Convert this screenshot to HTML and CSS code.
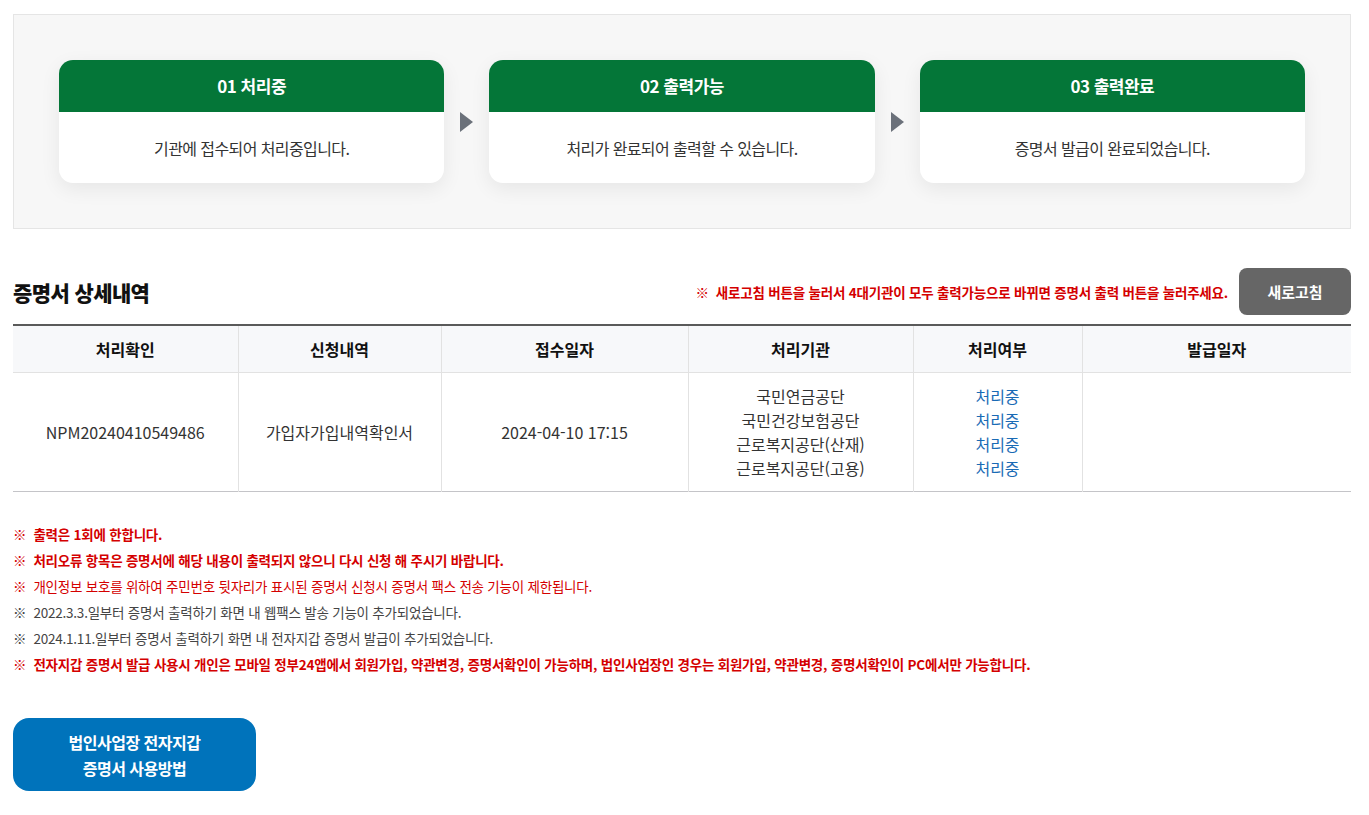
FILE: index.html
```html
<!DOCTYPE html>
<html lang="ko">
<head>
  <meta charset="UTF-8" />
  <meta name="viewport" content="width=device-width, initial-scale=1.0"/>
  <title>증명서 상세내역</title>
  <link rel="stylesheet" href="styles.css">
</head>
<body>
  <div class="page">
    <div class="steps">
      <div class="step">
        <div class="step-head">01 처리중</div>
        <div class="step-body">기관에 접수되어 처리중입니다.</div>
      </div>
      <div class="step-arrow"></div>
      <div class="step">
        <div class="step-head">02 출력가능</div>
        <div class="step-body">처리가 완료되어 출력할 수 있습니다.</div>
      </div>
      <div class="step-arrow"></div>
      <div class="step">
        <div class="step-head">03 출력완료</div>
        <div class="step-body">증명서 발급이 완료되었습니다.</div>
      </div>
    </div>

    <div class="detail-head">
      <h2>증명서 상세내역</h2>
      <div class="detail-tools">
        <p class="refresh-note">※&nbsp; 새로고침 버튼을 눌러서 4대기관이 모두 출력가능으로 바뀌면 증명서 출력 버튼을 눌러주세요.</p>
        <button class="btn-refresh">새로고침</button>
      </div>
    </div>

    <table class="detail-table">
      <colgroup>
        <col style="width:225px">
        <col style="width:203px">
        <col style="width:247px">
        <col style="width:225px">
        <col style="width:169px">
        <col>
      </colgroup>
      <thead>
        <tr>
          <th>처리확인</th>
          <th>신청내역</th>
          <th>접수일자</th>
          <th>처리기관</th>
          <th>처리여부</th>
          <th>발급일자</th>
        </tr>
      </thead>
      <tbody>
        <tr>
          <td>NPM20240410549486</td>
          <td>가입자가입내역확인서</td>
          <td>2024-04-10 17:15</td>
          <td>국민연금공단<br>국민건강보험공단<br>근로복지공단(산재)<br>근로복지공단(고용)</td>
          <td class="status">처리중<br>처리중<br>처리중<br>처리중</td>
          <td></td>
        </tr>
      </tbody>
    </table>

    <ul class="notes">
      <li class="red bold">※&nbsp; 출력은 1회에 한합니다.</li>
      <li class="red bold">※&nbsp; 처리오류 항목은 증명서에 해당 내용이 출력되지 않으니 다시 신청 해 주시기 바랍니다.</li>
      <li class="red">※&nbsp; 개인정보 보호를 위하여 주민번호 뒷자리가 표시된 증명서 신청시 증명서 팩스 전송 기능이 제한됩니다.</li>
      <li>※&nbsp; 2022.3.3.일부터 증명서 출력하기 화면 내 웹팩스 발송 기능이 추가되었습니다.</li>
      <li>※&nbsp; 2024.1.11.일부터 증명서 출력하기 화면 내 전자지갑 증명서 발급이 추가되었습니다.</li>
      <li class="red bold">※&nbsp; 전자지갑 증명서 발급 사용시 개인은 모바일 정부24앱에서 회원가입, 약관변경, 증명서확인이 가능하며, 법인사업장인 경우는 회원가입, 약관변경, 증명서확인이 PC에서만 가능합니다.</li>
    </ul>

    <button class="btn-guide">법인사업장 전자지갑<br>증명서 사용방법</button>
  </div>
</body>
</html>
```

FILE: styles.css
```css
body {
  margin: 0;
  font-family: "Noto Sans CJK KR", "Noto Sans", sans-serif;
  color: #222;
  background: #fff;
}

.page {
  width: 1338px;
  margin: 14px 0 0 13px;
}

/* 진행 단계 */
.steps {
  display: flex;
  align-items: center;
  gap: 16px;
  padding: 45px 45px 45px;
  background: #f7f7f7;
  border: 1px solid #e5e5e5;
}

.step {
  flex: 1;
  background: #fff;
  border-radius: 14px;
  overflow: hidden;
  box-shadow: 0 6px 20px rgba(0,0,0,0.07);
  text-align: center;
}

.step-head {
  height: 52px;
  line-height: 52px;
  background: #047638;
  color: #fff;
  font-size: 17px;
  font-weight: bold;
  letter-spacing: -0.5px;
}

.step-body {
  height: 71px;
  line-height: 72px;
  font-size: 16px;
  color: #333;
  letter-spacing: -0.6px;
}

.step-arrow {
  width: 0;
  height: 0;
  margin: 0 0 -1px;
  border-left: 13px solid #6b717a;
  border-top: 10px solid transparent;
  border-bottom: 10px solid transparent;
}

/* 상세내역 */
.detail-head {
  display: flex;
  justify-content: space-between;
  align-items: center;
  margin-top: 39px;
  margin-bottom: 9px;
}

.detail-head h2 {
  margin: 0;
  font-size: 21px;
  font-weight: 800;
  color: #111;
  letter-spacing: -0.6px;
}

.detail-tools {
  display: flex;
  align-items: center;
  gap: 11px;
}

.refresh-note {
  margin: 0;
  color: #d40000;
  font-size: 13.5px;
  font-weight: bold;
  letter-spacing: -0.2px;
}

.btn-refresh {
  width: 112px;
  height: 47px;
  border: none;
  border-radius: 8px;
  background: #666;
  color: #fff;
  font-family: inherit;
  font-size: 15px;
  font-weight: bold;
  cursor: pointer;
}

.detail-table {
  width: 100%;
  border-collapse: collapse;
  table-layout: fixed;
  border-top: 2px solid #5a5a5a;
  border-bottom: 1px solid #c4c4c8;
  font-size: 16px;
  text-align: center;
}

.detail-table th {
  height: 46px;
  padding: 0;
  background: #f7f8fa;
  font-weight: bold;
  color: #111;
  border-bottom: 1px solid #e2e2e2;
  border-left: 1px solid #e2e2e2;
}

.detail-table td {
  padding: 11px 0;
  line-height: 24px;
  color: #333;
  border-left: 1px solid #e2e2e2;
}

.detail-table th:first-child,
.detail-table td:first-child {
  border-left: none;
}

.detail-table td.status {
  color: #1a6bb5;
}

/* 안내문 */
.notes {
  list-style: none;
  margin: 29px 0 0;
  padding: 0;
  font-size: 13.5px;
  letter-spacing: -0.22px;
  color: #444;
}

.notes li {
  line-height: 26px;
}

.notes .red {
  color: #d40000;
}

.notes .bold {
  font-weight: bold;
}

.btn-guide {
  display: block;
  width: 243px;
  height: 73px;
  margin-top: 41px;
  border: none;
  border-radius: 16px;
  background: #0073bb;
  color: #fff;
  font-family: inherit;
  font-size: 16px;
  font-weight: bold;
  line-height: 26px;
  letter-spacing: -0.5px;
  cursor: pointer;
}
```
